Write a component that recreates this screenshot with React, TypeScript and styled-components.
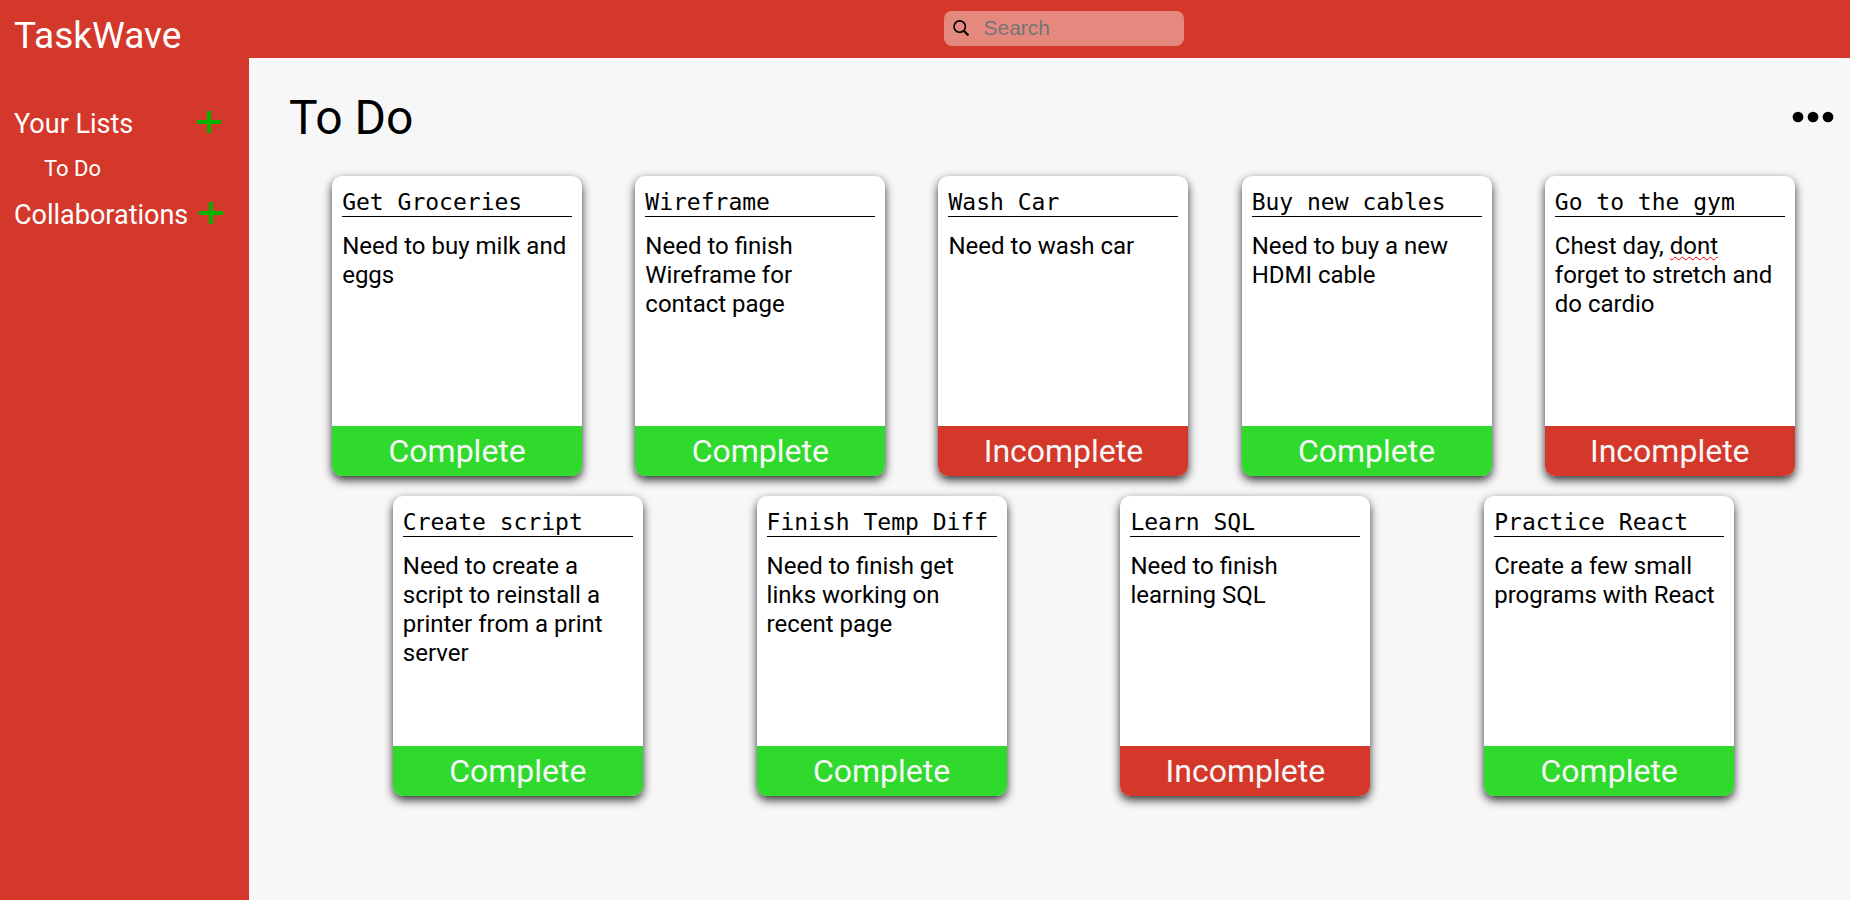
import React from "react";
import styled, { createGlobalStyle } from "styled-components";

const red = "#d4382b";

const GlobalStyle = createGlobalStyle`
  *, *::before, *::after { box-sizing: border-box; }
  body {
    margin: 0;
    background: #f7f7f7;
    color: #000;
    font-family: Roboto, "Liberation Sans", sans-serif;
  }
  h1, h2, h3, p, ul { margin: 0; padding: 0; font-weight: 400; }
  ul { list-style: none; }
  button { border: 0; padding: 0; background: none; cursor: pointer; font-family: inherit; }
`;

const Page = styled.div`
  display: flex;
  min-height: 100vh;
`;

const Sidebar = styled.aside`
  flex: 0 0 249px;
  padding: 12px 25px 0 14px;
  background: ${red};
  color: #fff;
`;

const Brand = styled.h1`
  font-size: 37px;
  line-height: 47px;
`;

const ListNav = styled.nav`
  margin-top: 42px;
`;

const NavGroup = styled.div<{ $gap: number }>`
  display: flex;
  align-items: center;
  gap: ${(p) => p.$gap}px;
  height: 46px;
`;

const GroupName = styled.h2`
  font-size: 27px;
  line-height: 46px;
`;

const AddButton = styled.button`
  display: flex;
  height: 46px;
  align-items: center;
  padding-bottom: 4px;
`;

const ListLink = styled.a`
  display: block;
  padding: 0 0 2px 30px;
  color: #fff;
  font-size: 22px;
  line-height: 43px;
  text-decoration: none;
`;

const Content = styled.div`
  flex: 1;
  min-width: 0;
`;

const TopBar = styled.header`
  display: flex;
  justify-content: center;
  height: 58px;
  padding: 11px 0 0 28px;
  background: ${red};
`;

const SearchBox = styled.label`
  display: flex;
  align-items: center;
  gap: 15px;
  width: 240px;
  height: 35px;
  padding: 0 9px 1px;
  border-radius: 8px;
  background: #e5897f;
`;

const SearchInput = styled.input`
  flex: 1;
  min-width: 0;
  padding: 0;
  border: 0;
  outline: 0;
  background: none;
  font-family: "Liberation Sans", Arial, sans-serif;
  font-size: 21px;
  line-height: 24px;
  &::placeholder { color: #757575; opacity: 1; }
`;

const Heading = styled.div`
  display: flex;
  align-items: center;
  justify-content: space-between;
  height: 108px;
  padding: 10px 16px 0 40px;
`;

const Title = styled.h2`
  padding-top: 2px;
  font-size: 48px;
  line-height: 56px;
`;

const MenuButton = styled.button`
  display: flex;
`;

const Board = styled.ul`
  display: flex;
  flex-wrap: wrap;
  justify-content: space-evenly;
  padding: 0 12px 30px 40px;
`;

const Card = styled.li`
  display: flex;
  flex-direction: column;
  width: 250px;
  height: 300px;
  margin: 10px;
  overflow: hidden;
  border-radius: 10px;
  background: #fff;
  box-shadow: 0 4px 10px rgba(0, 0, 0, 0.8);
`;

const CardText = styled.div`
  flex: 1;
  padding: 12px 10px 10px;
`;

const CardTitle = styled.h3`
  border-bottom: 1px solid #000;
  font-family: "DejaVu Sans Mono", monospace;
  font-size: 23px;
  line-height: 28px;
  white-space: nowrap;
`;

const Note = styled.p`
  margin-top: 15px;
  font-size: 24px;
  line-height: 29px;
`;

const Misspelt = styled.span`
  text-decoration: underline wavy #f00 1px;
  text-decoration-skip-ink: none;
  text-underline-offset: 2px;
`;

const Status = styled.button<{ $done: boolean }>`
  height: 50px;
  background: ${(p) => (p.$done ? "#2fda2d" : red)};
  color: #f7f7f7;
  font-size: 32px;
  line-height: 50px;
`;

const PlusIcon = () => (
  <svg width="24" height="24" viewBox="0 0 24 24" aria-hidden="true">
    <path d="M12 1V23M0 12H24" stroke="#00b400" strokeWidth="4" />
  </svg>
);

const SearchIcon = () => (
  <svg width="16" height="16" viewBox="0 0 16 16" fill="none" stroke="#000" aria-hidden="true">
    <circle cx="6.7" cy="6.6" r="5.7" strokeWidth="1.6" />
    <path d="M10.6 10.6L15.4 15.5" strokeWidth="2.2" />
  </svg>
);

const DotsIcon = () => (
  <svg width="42" height="12" viewBox="0 0 42 12" aria-hidden="true">
    <ellipse cx="6" cy="6" rx="5.4" ry="5.2" />
    <ellipse cx="21" cy="6" rx="5.4" ry="5.2" />
    <ellipse cx="36" cy="6" rx="5.4" ry="5.2" />
  </svg>
);

type Task = { title: string; note: React.ReactNode; done: boolean };

const tasks: Task[] = [
  { title: "Get Groceries", note: "Need to buy milk and eggs", done: true },
  { title: "Wireframe", note: "Need to finish Wireframe for contact page", done: true },
  { title: "Wash Car", note: "Need to wash car", done: false },
  { title: "Buy new cables", note: "Need to buy a new HDMI cable", done: true },
  {
    title: "Go to the gym",
    note: <>Chest day, <Misspelt>dont</Misspelt> forget to stretch and do cardio</>,
    done: false,
  },
  { title: "Create script", note: "Need to create a script to reinstall a printer from a print server", done: true },
  { title: "Finish Temp Diff", note: "Need to finish get links working on recent page", done: true },
  { title: "Learn SQL", note: "Need to finish learning SQL", done: false },
  { title: "Practice React", note: "Create a few small programs with React", done: true },
];

export default function App() {
  return (
    <>
      <GlobalStyle />
      <Page>
        <Sidebar>
          <Brand>TaskWave</Brand>
          <ListNav>
            <NavGroup $gap={64}>
              <GroupName>Your Lists</GroupName>
              <AddButton aria-label="Add list"><PlusIcon /></AddButton>
            </NavGroup>
            <ListLink href="#todo">To Do</ListLink>
            <NavGroup $gap={11}>
              <GroupName>Collaborations</GroupName>
              <AddButton aria-label="Add collaboration"><PlusIcon /></AddButton>
            </NavGroup>
          </ListNav>
        </Sidebar>
        <Content>
          <TopBar>
            <SearchBox>
              <SearchIcon />
              <SearchInput type="text" placeholder="Search" aria-label="Search" />
            </SearchBox>
          </TopBar>
          <main>
            <Heading>
              <Title>To Do</Title>
              <MenuButton aria-label="List options"><DotsIcon /></MenuButton>
            </Heading>
            <Board>
              {tasks.map((task) => (
                <Card key={task.title}>
                  <CardText>
                    <CardTitle>{task.title}</CardTitle>
                    <Note>{task.note}</Note>
                  </CardText>
                  <Status $done={task.done}>{task.done ? "Complete" : "Incomplete"}</Status>
                </Card>
              ))}
            </Board>
          </main>
        </Content>
      </Page>
    </>
  );
}
